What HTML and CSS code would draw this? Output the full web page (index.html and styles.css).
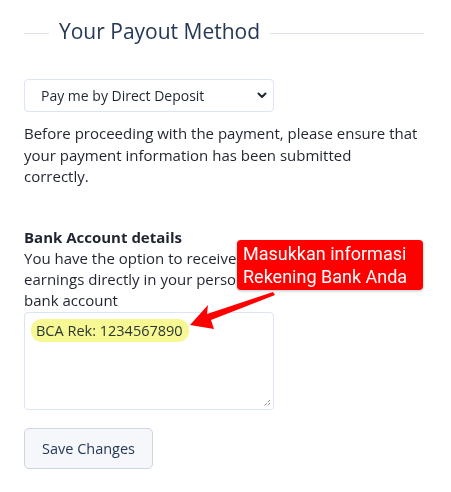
FILE: index.html
```html
<!DOCTYPE html>
<html lang="en">
<head>
<meta charset="utf-8">
<title>Your Payout Method</title>
<link rel="stylesheet" href="styles.css">
</head>
<body>
<main class="page">
  <div class="section-title">
    <span class="rule rule-short"></span>
    <h2>Your Payout Method</h2>
    <span class="rule rule-long"></span>
  </div>

  <div class="select-wrap">
    <div class="select">
      <span>Pay me by Direct Deposit</span>
      <svg class="chev" width="10" height="7" viewBox="0 0 10 7"><path d="M1.5 1.5 L5 5 L8.5 1.5" fill="none" stroke="#1f2733" stroke-width="2" stroke-linecap="round" stroke-linejoin="round"/></svg>
    </div>
  </div>

  <p class="note">Before proceeding with the payment, please ensure that your payment information has been submitted<br>correctly.</p>

  <div class="bank">
    <h3>Bank Account details</h3>
    <p class="bank-desc">You have the option to receive your earnings directly in your personal bank account</p>

    <div class="textarea">
      <span class="entry">BCA Rek: 1234567890<span class="hl"></span></span>
      <svg class="grip" width="8" height="8" viewBox="0 0 8 8"><path d="M7 1 L1 7 M7 4 L4 7" stroke="#555" stroke-width="1" stroke-dasharray="1 1"/></svg>
    </div>

    <div class="callout">Masukkan informasi<br>Rekening Bank Anda</div>
    <svg class="arrow" width="90" height="40" viewBox="188 294 90 40">
      <polygon points="273,296 275,299 211,324 214,333 190,329 208,309 207,318" fill="#f00"/>
    </svg>
  </div>

  <button class="btn" type="button">Save Changes</button>
</main>
</body>
</html>
```

FILE: styles.css
```css
* { box-sizing: border-box; }
html, body { margin: 0; padding: 0; background: #fff; }
body {
  font-family: "Open Sans", "DejaVu Sans", sans-serif;
  color: #1f2430;
}
.page {
  width: 451px;
  padding: 13px 27px 0 24px;
}
.section-title {
  display: flex;
  align-items: center;
  gap: 10px;
  height: 36px;
}
.rule { display: block; height: 1px; background: #dfe2e8; margin-top: 4px; }
.rule-short { width: 25px; }
.rule-long { flex: 1; }
.section-title h2 {
  margin: 0;
  font-size: 21px;
  font-weight: 500;
  color: #253856;
  line-height: 36px;
}
.select-wrap { margin-top: 30px; }
.select {
  width: 250px;
  height: 33px;
  border: 1px solid #dce5f6;
  border-radius: 4px;
  display: flex;
  align-items: center;
  justify-content: space-between;
  padding: 0 6px 0 16px;
  font-size: 14px;
  color: #1f2733;
}
.note {
  margin: 11px 0 0;
  font-size: 15px;
  line-height: 21.5px;
  color: #1f2430;
}
.bank { position: relative; margin-top: 39px; }
.bank h3 {
  margin: 0;
  font-size: 15px;
  font-weight: 700;
  line-height: 21px;
  color: #1f2430;
}
.bank-desc {
  margin: 0;
  width: 265px;
  font-size: 15px;
  line-height: 21px;
}
.textarea {
  position: relative;
  margin-top: 1px;
  width: 250px;
  height: 98px;
  border: 1px solid #dce5f6;
  border-radius: 4px;
  padding: 6px 11px;
}
.entry {
  position: relative;
  display: inline-block;
  font-size: 14.5px;
  line-height: 21px;
  color: #2a3a55;
}
.hl {
  position: absolute;
  left: -5px; right: -6px; top: -1px; bottom: -1px;
  border-radius: 11px;
  background: rgba(240, 240, 40, 0.5);
  mix-blend-mode: multiply;
}
.grip { position: absolute; right: 2px; bottom: 2px; }
.callout {
  position: absolute;
  left: 213px;
  top: 13px;
  width: 186px;
  height: 50px;
  background: #ff0000;
  border-radius: 4px;
  box-shadow: 0 1px 3px rgba(0,0,0,0.25);
  color: #fff;
  font-family: Roboto, "Liberation Sans", sans-serif;
  font-size: 18px;
  line-height: 23.5px;
  padding: 2px 0 0 6px;
}
.arrow { position: absolute; left: 164px; top: 63px; }
.btn {
  display: block;
  margin-top: 18px;
  width: 129px;
  height: 41px;
  background: #f5f7fa;
  border: 1px solid #cdd6e1;
  border-radius: 5px;
  font-family: inherit;
  font-size: 14.5px;
  color: #253856;
  padding: 0;
}
```
